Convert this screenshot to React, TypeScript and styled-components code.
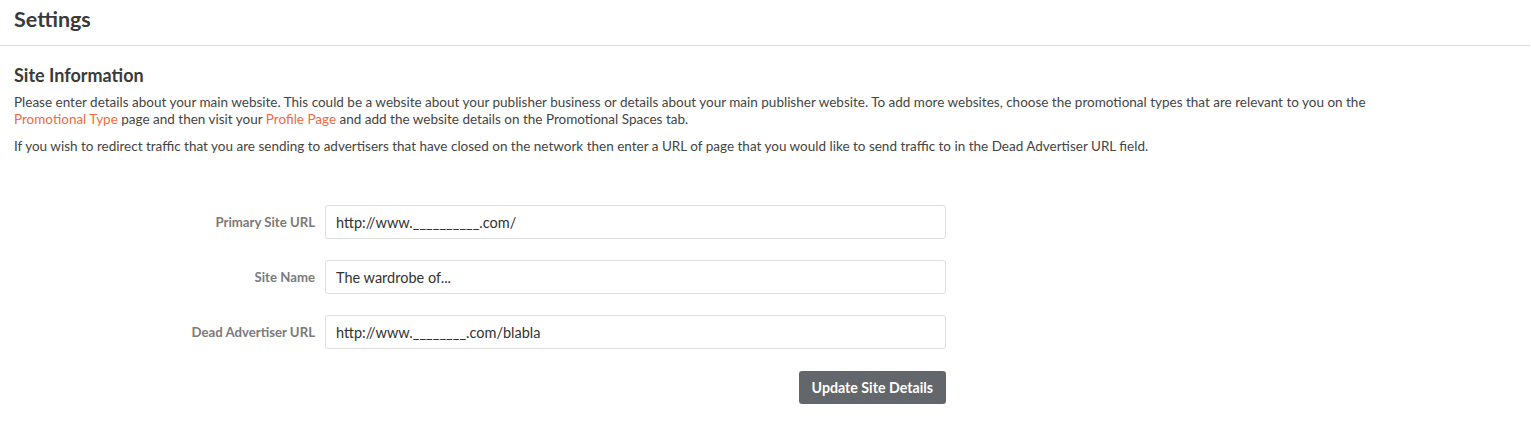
import { Fragment } from "react";
import styled, { createGlobalStyle } from "styled-components";

const GlobalStyle = createGlobalStyle`
  body {
    margin: 0;
    background: #fff;
    font-family: "Lato", "Liberation Sans", sans-serif;
    color: #444;
  }
`;

const Page = styled.div`
  width: 1531px;
  height: 435px;
  overflow: hidden;
  background: #fff;
`;

const Header = styled.header`
  height: 46px;
  border-bottom: 1px solid #dcdcdc;
  margin-right: 1px;
  display: flex;
  align-items: center;
  padding: 0 14px;
  box-sizing: border-box;
`;

const Title = styled.h1`
  margin: 0 0 7px;
  font-size: 21.5px;
  font-weight: 700;
  color: #3a3a3a;
`;

const Section = styled.section`
  padding: 18px 14px 0;
`;

const SectionTitle = styled.h2`
  margin: 0 0 8px;
  font-size: 18px;
  font-weight: 700;
  color: #3a3a3a;
`;

const Text = styled.p`
  margin: 0 0 10px;
  font-size: 13.5px;
  line-height: 17px;
  color: #444;
`;

const Accent = styled.a`
  color: #f26a3d;
  text-decoration: none;
`;

const Form = styled.form`
  margin-top: 50px;
  display: grid;
  grid-template-columns: 301px 621px;
  column-gap: 10px;
  row-gap: 21px;
  align-items: center;
`;

const Label = styled.label`
  text-align: right;
  font-size: 13.2px;
  font-weight: 700;
  color: #7a7a7a;
`;

const Input = styled.input`
  height: 34px;
  box-sizing: border-box;
  border: 1px solid #dedede;
  border-radius: 3px;
  padding: 0 10px;
  font-family: inherit;
  font-size: 14.5px;
  color: #333;
  outline: none;
`;

const Actions = styled.div`
  grid-column: 2;
  display: flex;
  justify-content: flex-end;
  margin-top: 1px;
`;

const Button = styled.button`
  height: 33px;
  padding: 0 13px;
  border: none;
  border-radius: 3px;
  background: #63666a;
  color: #fff;
  font-family: inherit;
  font-size: 14.2px;
  font-weight: 700;
  cursor: pointer;
`;

const fields = [
  { id: "primary", label: "Primary Site URL", value: "http://www.__________.com/" },
  { id: "name", label: "Site Name", value: "The wardrobe of..." },
  { id: "dead", label: "Dead Advertiser URL", value: "http://www.________.com/blabla" },
];

export default function App() {
  return (
    <Page>
      <GlobalStyle />
      <Header>
        <Title>Settings</Title>
      </Header>
      <Section>
        <SectionTitle>Site Information</SectionTitle>
        <Text>
          Please enter details about your main website. This could be a website about your
          publisher business or details about your main publisher website. To add more websites,
          choose the promotional types that are relevant to you on the
          <br />
          <Accent href="#">Promotional Type</Accent> page and then visit your{" "}
          <Accent href="#">Profile Page</Accent> and add the website details on the Promotional
          Spaces tab.
        </Text>
        <Text>
          If you wish to redirect traffic that you are sending to advertisers that have closed on
          the network then enter a URL of page that you would like to send traffic to in the Dead
          Advertiser URL field.
        </Text>
        <Form onSubmit={(e) => e.preventDefault()}>
          {fields.map((f) => (
            <Fragment key={f.id}>
              <Label htmlFor={f.id}>{f.label}</Label>
              <Input id={f.id} defaultValue={f.value} />
            </Fragment>
          ))}
          <Actions>
            <Button type="submit">Update Site Details</Button>
          </Actions>
        </Form>
      </Section>
    </Page>
  );
}
